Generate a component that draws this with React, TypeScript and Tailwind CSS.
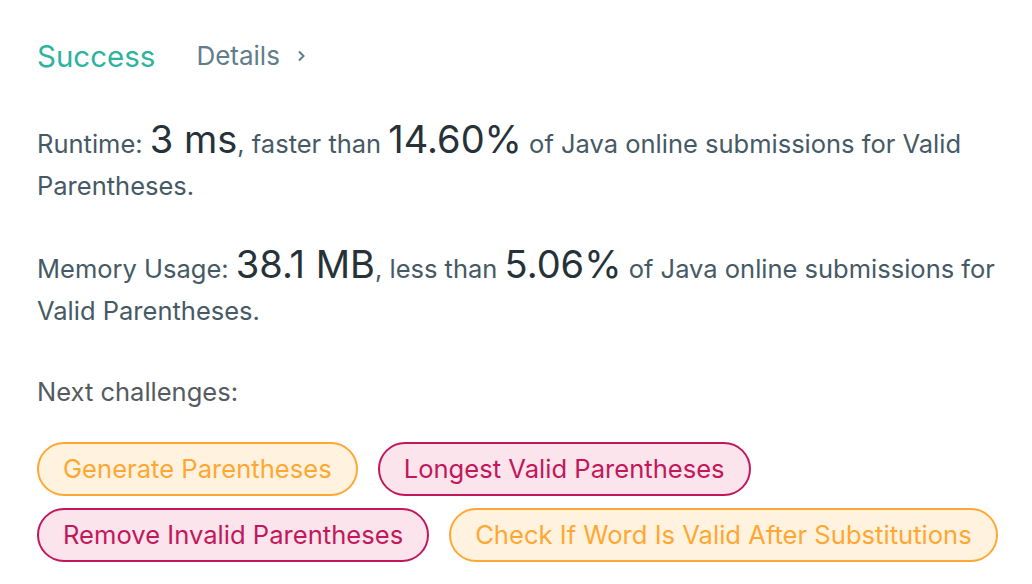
import React from "react";

const challenges = [
  { name: "Generate Parentheses", tone: "medium" },
  { name: "Longest Valid Parentheses", tone: "hard" },
  { name: "Remove Invalid Parentheses", tone: "hard" },
  { name: "Check If Word Is Valid After Substitutions", tone: "medium" },
];

export default function App() {
  return (
    <div
      className="min-h-[584px] w-[1032px] bg-white pl-[37px] pt-[38px] text-[#455a64]"
      style={{ fontFamily: "Inter, 'Liberation Sans', sans-serif" }}
    >
      <div className="flex items-center">
        <span className="text-[29.5px] leading-[36px] text-[#2db39e]">Success</span>
        <span className="ml-[41px] flex items-center text-[26px] leading-[36px] text-[#607d8b]">
          Details
          <svg className="ml-[16px]" width="10" height="14" viewBox="0 0 10 14" fill="none">
            <path d="M3 2.5 L7.5 7 L3 11.5" stroke="#607d8b" strokeWidth="2" />
          </svg>
        </span>
      </div>

      <p className="mt-[46px] text-[25.5px] leading-[42px]">
        Runtime: <span className="text-[38px] leading-none text-[#263238]">3 ms</span>, faster than{" "}
        <span className="text-[38px] leading-none text-[#263238]">14.60%</span> of Java online submissions
        for Valid Parentheses.
      </p>

      <p className="mt-[38px] text-[25.5px] leading-[42px]">
        Memory Usage: <span className="text-[38px] leading-none text-[#263238]">38.1 MB</span>, less than{" "}
        <span className="text-[38px] leading-none text-[#263238]">5.06%</span> of Java online submissions
        for Valid Parentheses.
      </p>

      <p className="mt-[39px] text-[25.5px] leading-[42px] text-[#555b60]">Next challenges:</p>

      <div className="mt-[29px] flex flex-wrap gap-x-[20px] gap-y-[12px]">
        {challenges.map((c) =>
          c.tone === "medium" ? (
            <span
              key={c.name}
              className="rounded-full border-2 border-[#ffa733] bg-[#fff3e0] px-[24px] text-[25.6px] leading-[50px] text-[#ffa733]"
            >
              {c.name}
            </span>
          ) : (
            <span
              key={c.name}
              className="rounded-full border-2 border-[#c2185b] bg-[#fce4ec] px-[24px] text-[25.6px] leading-[50px] text-[#c2185b]"
            >
              {c.name}
            </span>
          )
        )}
      </div>
    </div>
  );
}
